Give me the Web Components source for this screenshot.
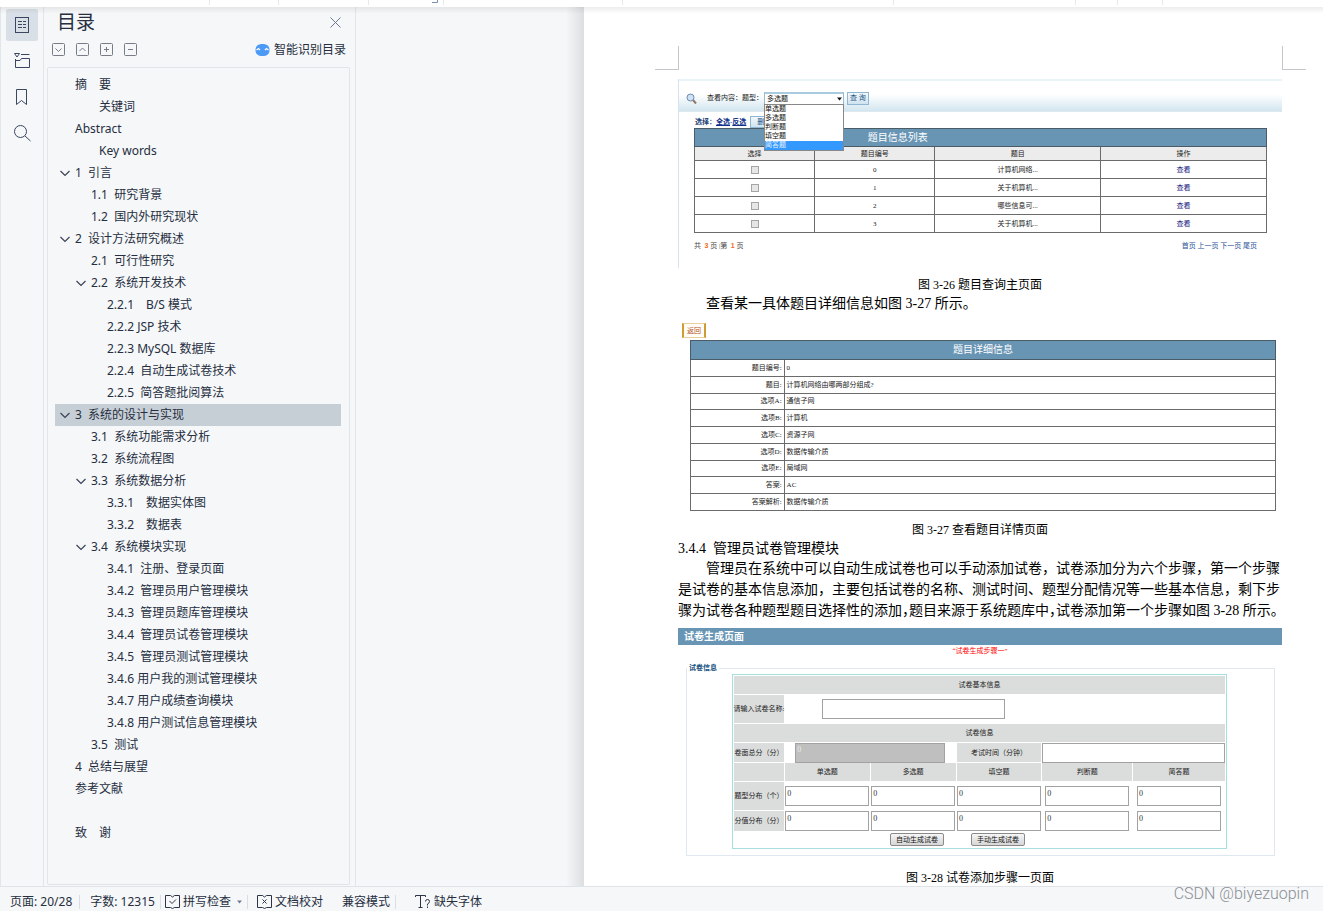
<!DOCTYPE html>
<html lang="zh-CN">
<head>
<meta charset="utf-8">
<title>文档目录</title>
<style>
  html, body { margin: 0; height: 100%; }
  body { font: 12px/18px "Noto Sans", "Noto Sans CJK SC", sans-serif; color: #262e40; background: #f5f7f9; overflow: hidden; }
</style>
</head>
<body>
<word-app></word-app>
<script>
const define = (name, html, setup) => {
  const template = document.createElement('template');
  template.innerHTML = html;
  customElements.define(name, class extends HTMLElement {
    constructor() {
      super();
      this.attachShadow({ mode: 'open' }).append(template.content.cloneNode(true));
    }
    connectedCallback() { if (setup) setup(this, this.shadowRoot); }
  });
};

/* ribbon edge */
define('ribbon-edge', `
<style>
  :host { display: flex; flex: none; height: 7px; background: #fff; }
  i { box-sizing: border-box; flex: none; border-right: 1px solid #e6e8ec; height: 5px; }
  .a { width: 210px; } .b { width: 69px; } .c { width: 90px; } .e { width: 179px; }
  .f { width: 271px; } .g { width: 182px; } .h { width: 42px; } .k { width: 45px; }
  .d { width: 75px; display: flex; justify-content: flex-end; }
  svg { margin-right: 5px; }
</style>
<i class="a"></i><i class="b"></i><i class="c"></i>
<i class="d"><svg width="6" height="4" fill="none" stroke="#7d8fae"><path d="M5.5 0V2.5H0"/></svg></i>
<i class="e"></i><i class="f"></i><i class="g"></i><i class="h"></i><i class="k"></i>`);

/* left icon rail */
define('icon-rail', `
<style>
  :host { box-sizing: border-box; display: flex; flex-direction: column; align-items: center; gap: 4px; flex: none; width: 44px; padding-top: 2px;
    border: solid #e2e5ea; border-width: 0 1px; }
  button { width: 32px; height: 32px; padding: 8px; border: 0; border-radius: 2px; background: none; color: #3a4662; }
  button.on { background: #d9dfe6; }
  svg { display: block; fill: none; stroke: currentColor; }
</style>
<button class="on" aria-label="目录"><svg width="16" height="16" stroke-width="1"><rect x="1.5" y="0.5" width="13" height="15"/><path d="M4 4.5h4M9 4.5h3M4 7.5h4M9 7.5h3M4 10.5h4M9 10.5h3"/></svg></button>
<button aria-label="章节"><svg width="17" height="16"><path d="M0.5 0.5h5L3 4zM7 1.5h8.500M1.500 6v8.500h14v-9H7.500L6 7.500H1.500"/></svg></button>
<button aria-label="书签"><svg width="16" height="16"><path d="M2.500 0.500h10v15l-5-4-5 4z"/></svg></button>
<button aria-label="查找"><svg width="17" height="17"><circle cx="6.500" cy="6.500" r="6"/><path d="M11 11l5.500 5"/></svg></button>`);

/* one row of the outline */
define('outline-item', `
<style>
  :host { display: flex; align-items: center; height: 22px; white-space: pre; padding-left: calc(var(--level) * 16px + 4px); }
  :host([current]) { background: #c6ced6; }
  span { width: 16px; height: 10px; flex: none; }
  svg { display: none; fill: none; stroke: #3b4355; stroke-width: 1.2; }
  :host([open]) svg { display: block; }
</style>
<span><svg width="12" height="10"><path d="M1.500 3l4.500 4.500L10.500 3"/></svg></span><slot></slot>`);

define('outline-panel', `
<style>
  :host { box-sizing: border-box; display: flex; flex-direction: column; flex: none; width: 312px; border-right: 1px solid #e2e5ea; }
  header { display: flex; justify-content: space-between; align-items: center; height: 30px; padding: 0 14px 0 13px; }
  h2 { margin: 0; font-size: 19px; line-height: 28px; font-weight: 400; }
  button { border: 0; padding: 0; background: none; color: inherit; font: inherit; }
  svg { display: block; fill: none; }
  .tools { display: flex; align-items: center; gap: 11px; height: 24px; padding: 0 9px 0 8px; color: #777d88; }
  .tools svg { stroke: currentColor; }
  .smart { display: flex; align-items: center; gap: 4px; margin-left: auto; padding-top: 2px; color: #262e40; }
  .tools .smart svg { stroke: none; }
  nav { flex: 1; min-height: 0; overflow: hidden; margin: 6px 5px 1px 3px; padding: 6px 8px 0 7px; border: 1px solid #e1e4e9; border-radius: 2px; }
</style>
<header><h2>目录</h2><button aria-label="关闭"><svg width="11" height="11" stroke="#6d7890"><path d="M0.500 0.500l10 10M10.500 0.500l-10 10"/></svg></button></header>
<div class="tools">
  <button aria-label="展开"><svg width="13" height="13"><rect x="0.500" y="0.500" width="12" height="12" rx="1"/><path d="M3.500 5.500l3 3 3-3"/></svg></button>
  <button aria-label="收起"><svg width="13" height="13"><rect x="0.500" y="0.500" width="12" height="12" rx="1"/><path d="M3.500 8l3-3 3 3"/></svg></button>
  <button aria-label="增加"><svg width="13" height="13"><rect x="0.500" y="0.500" width="12" height="12" rx="1"/><path d="M4 6.500h5M6.500 4v5"/></svg></button>
  <button aria-label="减少"><svg width="13" height="13"><rect x="0.500" y="0.500" width="12" height="12" rx="1"/><path d="M4 6.500h5"/></svg></button>
  <button class="smart"><svg width="15" height="12"><path d="M0.500 6C0.500 2 3 0 7.500 0S14.500 2 14.500 6s-2.500 6-7 6-7-2-7-6z" fill="#4c9af5"/><path d="M1.500 6l2-1.500L5 6M10 6l1.500-1.500 2 1.500" fill="none" stroke="#fff" stroke-width="1.200"/></svg>智能识别目录</button>
</div>
<nav></nav>`, (host, root) => {
  const rows = [
    [0, '摘\u3000要'], [0, '\u3000\u3000关键词'], [0, 'Abstract'], [0, '\u3000\u3000Key words'],
    [0, '1  引言', 'open'], [1, '1.1  研究背景'], [1, '1.2  国内外研究现状'],
    [0, '2  设计方法研究概述', 'open'], [1, '2.1  可行性研究'], [1, '2.2  系统开发技术', 'open'],
    [2, '2.2.1\u3000B/S 模式'], [2, '2.2.2 JSP 技术'], [2, '2.2.3 MySQL 数据库'], [2, '2.2.4  自动生成试卷技术'], [2, '2.2.5  简答题批阅算法'],
    [0, '3  系统的设计与实现', 'open', 'current'], [1, '3.1  系统功能需求分析'], [1, '3.2  系统流程图'],
    [1, '3.3  系统数据分析', 'open'], [2, '3.3.1\u3000数据实体图'], [2, '3.3.2\u3000数据表'],
    [1, '3.4  系统模块实现', 'open'], [2, '3.4.1  注册、登录页面'], [2, '3.4.2  管理员用户管理模块'], [2, '3.4.3  管理员题库管理模块'],
    [2, '3.4.4  管理员试卷管理模块'], [2, '3.4.5  管理员测试管理模块'], [2, '3.4.6 用户我的测试管理模块'], [2, '3.4.7 用户成绩查询模块'],
    [2, '3.4.8 用户测试信息管理模块'], [1, '3.5  测试'], [0, '4  总结与展望'], [0, '参考文献'], [0, ''], [0, '致\u3000谢']];
  root.querySelector('nav').append(...rows.map(([level, text, ...flags]) => {
    const item = document.createElement('outline-item');
    item.style.setProperty('--level', level);
    item.textContent = text;
    flags.forEach(f => item.setAttribute(f, ''));
    return item;
  }));
});

/* figure: question query page */
define('query-figure', `
<style>
  :host { display: block; box-sizing: border-box; height: 189px; border-left: 1px solid #d5e3ee; font-size: 7px; line-height: 10px; color: #222; }
  .bar { box-sizing: border-box; height: 33px; display: flex; align-items: center; padding: 4px 0 0 7px; border-top: 2px solid #e9f4fa; border-bottom: 1px solid #dde9ef;
    background: linear-gradient(#fff 45%, #d2e6f0); }
  .bar svg.find { margin-right: 10px; }
  .pick { position: relative; width: 80px; margin-left: 1px; }
  select { display: block; box-sizing: border-box; width: 100%; height: 13px; appearance: none; border: 1px solid #9bb9cd; border-top: 2px solid #a9cbe0; border-radius: 0; background: #fff; padding: 0 2px; font: inherit; color: #111; }
  .caret { position: absolute; right: 2px; top: 5px; }
  ul { position: absolute; z-index: 1; left: 0; top: 12px; box-sizing: border-box; width: 100%; margin: 0; padding: 0; list-style: none; border: 1px solid #888; background: #fff; line-height: 9px; color: #111; }
  li[aria-selected] { background: #3399ff; color: #e6f3ff; }
  button { box-sizing: border-box; height: 13px; padding: 0 3px; border: 1px solid #8fb7d3; background: linear-gradient(#f1f8fc, #cfe3f0); font: inherit; color: #1d5282; line-height: 9px; white-space: pre; }
  .bar button { margin-left: 3px; padding: 0 2px; }
  .choose { display: flex; align-items: center; height: 16px; padding: 4px 0 0 16px; box-sizing: border-box; font-weight: 700; color: #1b3f75; }
  .choose button { flex: none; width: 14px; height: 12px; margin-left: 4px; padding: 0 0 0 6px; border-right: 0; text-align: left; font-weight: 400; }
  a { color: #1a1a80; text-decoration: none; }
  .choose a { text-decoration: underline; color: #10308a; }
  table { width: calc(100% - 30px); margin: 0 14px 0 15px; border-collapse: collapse; table-layout: fixed; text-align: center; }
  th, td { padding: 0; border: 1px solid #6b6b6b; font-weight: 400; }
  .title th { height: 17px; background: #6895b4; color: #fff; font-size: 10px; border-color: #4c5c66; }
  .title th:first-child { border-right: 0; }
  .title th + th { border-left: 0; }
  .head th { height: 13px; background: #ececec; }
  td { height: 17px; }
  td input { display: block; margin: 0 auto; width: 8px; height: 8px; appearance: none; border: 1px solid #a5a5a5; background: #e6e6e6; }
  .pages { display: flex; justify-content: space-between; padding: 8px 25px 0 15px; color: #444; white-space: pre; }
  .pages b { color: #ee6a20; font-family: "Liberation Sans", sans-serif; }
  .pages a { color: #2a4f96; }
</style>
<div class="bar">
  <svg class="find" width="11" height="11" fill="none"><circle cx="4.500" cy="4.500" r="3.500" fill="#cfe3f7" stroke="#6e87ad"/><path d="M7 7l3 3.500" stroke="#8f7a66" stroke-width="2"/></svg>
  <span>查看内容：</span><label for="kind">题型：</label>
  <div class="pick"><select id="kind"><option>多选题</option></select>
    <svg class="caret" width="5" height="4"><path d="M0 0.500h5L2.500 3.500z" fill="#111"/></svg>
    <ul role="listbox" aria-label="题型选项"><li role="option">单选题</li><li role="option">多选题</li><li role="option">判断题</li><li role="option">填空题</li><li role="option" aria-selected="true">简答题</li></ul></div>
  <button>查 询</button>
</div>
<div class="choose">选择：<a href="#">全选</a>-<a href="#">反选</a><button aria-label="删除">删</button></div>
<table>
  <colgroup><col style="width:21%"><col style="width:21%"><col style="width:29%"><col style="width:29%"></colgroup>
  <thead><tr class="title"><th colspan="3">题目信息列表</th><th></th></tr>
  <tr class="head"><th>选择</th><th>题目编号</th><th>题目</th><th>操作</th></tr></thead>
  <tbody></tbody>
</table>
<div class="pages"><span>共  <b>3</b> 页 |第  <b>1</b> 页</span><span><a href="#">首页</a> <a href="#">上一页</a> <a href="#">下一页</a> <a href="#">尾页</a></span></div>`,
(host, root) => {
  root.querySelector('tbody').innerHTML = ['计算机网络...', '关于机算机...', '哪些信息可...', '关于机算机...']
    .map((t, i) => `<tr><td><input type="checkbox" aria-label="选择 ${i}"></td><td>${i}</td><td>${t}</td><td><a href="#">查看</a></td></tr>`).join('');
});

/* figure: question detail page */
define('detail-figure', `
<style>
  :host { display: block; padding: 0 6px 0 4px; font-size: 7px; line-height: 10px; color: #222; }
  button { display: block; box-sizing: border-box; width: 24px; height: 15px; margin-bottom: 2px; padding: 0; border: 1px solid #e6c88a; border-width: 1px 2px; border-color: #e9cf9b #cf9c33; background: #fffdf6; color: #b3531f; font: inherit; }
  table { width: calc(100% - 8px); height: 171px; margin-left: 8px; border-collapse: collapse; }
  th, td { height: 15px; padding: 0 2px; border: 1px solid #6b6b6b; font-weight: 400; }
  thead th { height: 18px; background: #6895b4; color: #fff; font-size: 10px; border-color: #4c5c66; }
  tbody th { width: 16%; box-sizing: border-box; text-align: right; }
</style>
<button>返回</button>
<table><thead><tr><th colspan="2">题目详细信息</th></tr></thead><tbody></tbody></table>`, (host, root) => {
  root.querySelector('tbody').innerHTML = [['题目编号', '0'], ['题目', '计算机网络由哪两部分组成?'], ['选项A', '通信子网'], ['选项B', '计算机'], ['选项C', '资源子网'],
    ['选项D', '数据传输介质'], ['选项E', '局域网'], ['答案', 'AC'], ['答案解析', '数据传输介质']]
    .map(([k, v]) => `<tr><th>${k}:</th><td>${v}</td></tr>`).join('');
});

/* figure: exam paper generation form */
define('exam-figure', `
<style>
  :host { display: block; font-size: 7px; line-height: 8px; color: #222; }
  h3 { margin: 0; padding-left: 6px; font-size: 10px; line-height: 17px; font-weight: 700; color: #fff; background: #6895b4; }
  p { margin: 0 0 7px; line-height: 12px; text-align: center; color: #f00; }
  fieldset { min-width: 0; margin: 0 7px 0 8px; padding: 2px 47px 6px 45px; border: 1px solid #dfe8f0; }
  legend { margin-left: -45px; padding: 0 2px; font-weight: 700; color: #14507f; }
  .grid { display: grid; grid-template-columns: 50fr 85fr 85fr 85fr 90fr 92fr; grid-template-rows: 18px 28px 18px 19px 18px 28px 20px 15px; gap: 1px; padding: 1px; border: 1px solid #a6dfdc; }
  .g { background: #dbdddc; }
  .grid > * { display: flex; align-items: center; justify-content: center; min-width: 0; white-space: nowrap; }
  .all { grid-column: 1 / -1; }
  .two { grid-column: span 2; }
  .name { grid-column: span 5; }
  .grid > .name { justify-content: flex-start; padding-left: 37px; }
  input { box-sizing: border-box; width: 84px; max-width: 100%; height: 20px; padding: 0 1px 6px; border: 1px solid #a2a2a2; border-radius: 0; background: #fff; font: inherit; font-size: 8px; color: #333; }
  .name input { width: 183px; max-width: 100%; }
  .two input { width: 100%; }
  .two input:disabled { width: 150px; background: #bfbfbf; color: #eee; }
  .actions { gap: 27px; padding-right: 44px; }
  button { box-sizing: border-box; width: 54px; height: 13px; padding: 0; border: 1px solid #8a8a8a; border-radius: 2px; background: linear-gradient(#f6f6f6, #d6d6d6); font: inherit; color: #111; }
</style>
<h3>试卷生成页面</h3>
<p>“试卷生成步骤一”</p>
<fieldset><legend>试卷信息</legend>
<div class="grid">
  <div class="g all">试卷基本信息</div>
  <label class="g" for="title">请输入试卷名称:</label><div class="name"><input id="title"></div>
  <div class="g all">试卷信息</div>
  <label class="g" for="total">卷面总分（分）</label><div class="two"><input id="total" value="0" disabled></div>
  <label class="g" for="time">考试时间（分钟）</label><div class="two"><input id="time"></div>
  <div class="g"></div><div class="g">单选题</div><div class="g">多选题</div><div class="g">填空题</div><div class="g">判断题</div><div class="g">简答题</div>
  <div class="g">题型分布（个）</div><div><input aria-label="单选题个数" value="0"></div><div><input aria-label="多选题个数" value="0"></div><div><input aria-label="填空题个数" value="0"></div><div><input aria-label="判断题个数" value="0"></div><div><input aria-label="简答题个数" value="0"></div>
  <div class="g">分值分布（分）</div><div><input aria-label="单选题分值" value="0"></div><div><input aria-label="多选题分值" value="0"></div><div><input aria-label="填空题分值" value="0"></div><div><input aria-label="判断题分值" value="0"></div><div><input aria-label="简答题分值" value="0"></div>
  <div class="all actions"><button>自动生成试卷</button><button>手动生成试卷</button></div>
</div></fieldset>`);

define('crop-marks', `
<style>
  :host { display: flex; justify-content: space-between; height: 24px; margin: 0 -24px 0 -23px; }
  i { box-sizing: border-box; width: 24px; border: solid #c4c6c9; border-width: 0 1px 1px 0; }
  i + i { border-width: 0 0 1px 1px; }
</style><i></i><i></i>`);

/* document page */
define('doc-page', `
<style>
  :host { display: block; flex: 1; min-width: 0; overflow: hidden; background: #fff; padding: 39px 41px 0 94px;
    font: 14px/21px "Liberation Serif", "Noto Sans CJK SC", serif; color: #000; }
  query-figure { margin: 9px 0 8px; }
  detail-figure { margin: 10px 0; }
  exam-figure { margin: 7px 0 13px; }
  p, h3 { margin: 0; font-weight: 400; font-size: 14px; }
  .caption { font-size: 12px; line-height: 18px; text-align: center; }
  .lead { line-height: 19px; text-indent: 28px; }
  h3 { line-height: 19px; white-space: pre; }
  .body { text-indent: 28px; }
  .tight { display: block; text-indent: 0; font-feature-settings: "halt"; }
</style>
<crop-marks></crop-marks>
<query-figure></query-figure>
<p class="caption">图 3-26 题目查询主页面</p>
<p class="lead">查看某一具体题目详细信息如图 3-27 所示。</p>
<detail-figure></detail-figure>
<p class="caption">图 3-27 查看题目详情页面</p>
<h3>3.4.4  管理员试卷管理模块</h3>
<p class="body">管理员在系统中可以自动生成试卷也可以手动添加试卷，试卷添加分为六个步骤，第一个步骤是试卷的基本信息添加，主要包括试卷的名称、测试时间、题型分配情况等一些基本信息，剩下步<span class="tight">骤为试卷各种题型题目选择性的添加，题目来源于系统题库中，试卷添加第一个步骤如图 3-28 所示。</span></p>
<exam-figure></exam-figure>
<p class="caption">图 3-28 试卷添加步骤一页面</p>`);

/* bottom status bar */
define('status-bar', `
<style>
  :host { box-sizing: border-box; position: relative; display: flex; align-items: center; flex: none; height: 25px; padding: 5px 0 0 10px; border-top: 1px solid #e0e3e8; background: #f5f7f9; white-space: nowrap; }
  i { width: 1px; height: 14px; background: #dadde3; }
  button { display: flex; align-items: center; gap: 3px; padding: 0; border: 0; background: none; font: inherit; color: inherit; }
  svg { fill: none; stroke: #2c3446; }
  .pg { margin-right: 7px; } .wc { margin: 0 5px 0 10px; } .sp { margin: 0 5px 0 4px; } .ck { margin: 0 19px 0 9px; } .cm { margin-right: 5px; } .ft { margin-left: 19px; }
  .sp .v { margin-left: 3px; fill: #6e7c98; stroke: none; }
  .mark { position: absolute; right: 14px; bottom: 6px; font-family: Roboto, sans-serif; font-weight: 300; font-size: 16px; line-height: 22px; color: #8c8f95; }
</style>
<span class="pg">页面: 20/28</span><i></i><span class="wc">字数: 12315</span><i></i>
<button class="sp"><svg width="15" height="14"><path d="M5.500 0.500h-5v12h5l2 1 2-1h5v-12h-5l-2 1.500zM4.500 6l2.500 2.500 4-4"/></svg>拼写检查<svg class="v" width="5" height="4"><path d="M0 0.500h5L2.500 3.500z"/></svg></button><i></i>
<button class="ck"><svg width="15" height="14"><path d="M5.500 0.500h-5v12h5l2 1 2-1h5v-12h-5l-2 1.500zM5.500 4.500l4 4M9.500 4.500l-4 4"/></svg>文档校对</button>
<button class="cm">兼容模式</button><i></i>
<button class="ft"><svg width="16" height="15"><path d="M0.500 3V1.500h10V3M5.500 1.500v12M3.500 13.500h4M10.500 7.500q0-2 2-2t2 2q0 1.500-2 2.500v1.500M12.500 12.500v1.500"/></svg>缺失字体</button>
<span class="mark">CSDN @biyezuopin</span>`);

define('word-app', `
<style>
  :host { display: flex; flex-direction: column; height: 100vh; overflow: hidden; }
  main { position: relative; display: flex; flex: 1; min-height: 0; }
  main::before { content: ""; position: absolute; z-index: 2; left: 0; right: 0; top: 0; height: 7px; background: linear-gradient(rgba(0,0,0,.07), rgba(0,0,0,0)); }
  .gutter { flex: none; width: 228px; background: linear-gradient(90deg, #f5f7f9 92%, #dcdee1); }
</style>
<ribbon-edge></ribbon-edge>
<main><icon-rail></icon-rail><outline-panel></outline-panel><div class="gutter"></div><doc-page></doc-page></main>
<status-bar></status-bar>`);
</script>
</body>
</html>
